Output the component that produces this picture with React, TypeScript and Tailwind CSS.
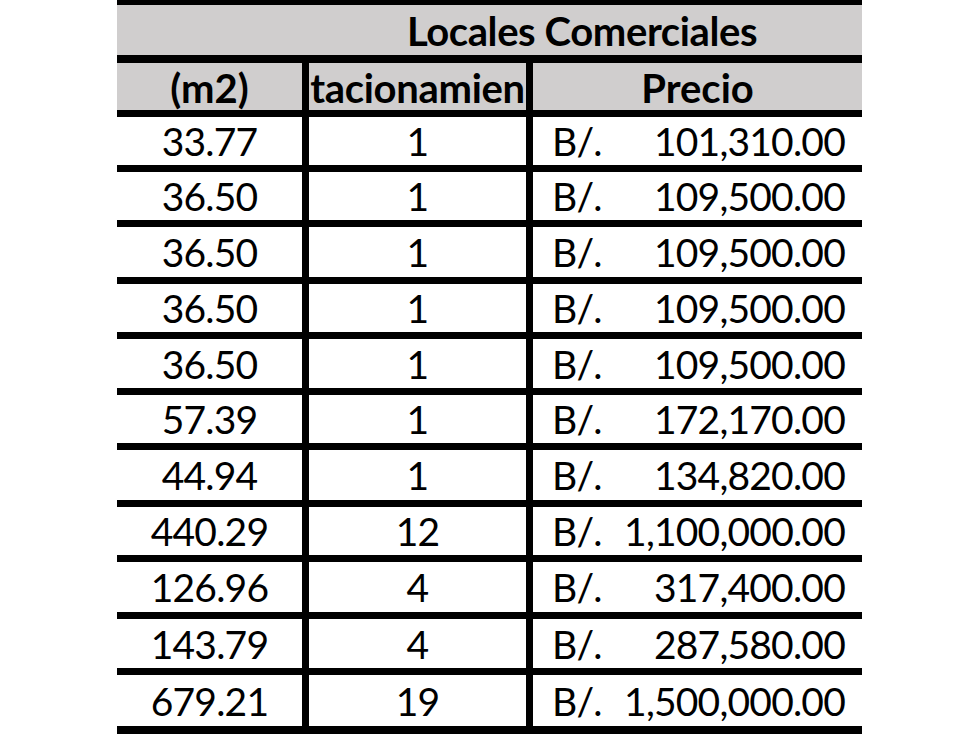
const rows = [
  { area: "33.77", parking: "1", price: "101,310.00", h: "h-[55px]" },
  { area: "36.50", parking: "1", price: "109,500.00", h: "h-[55px]" },
  { area: "36.50", parking: "1", price: "109,500.00", h: "h-[57px]" },
  { area: "36.50", parking: "1", price: "109,500.00", h: "h-[55px]" },
  { area: "36.50", parking: "1", price: "109,500.00", h: "h-[56px]" },
  { area: "57.39", parking: "1", price: "172,170.00", h: "h-[55px]" },
  { area: "44.94", parking: "1", price: "134,820.00", h: "h-[57px]" },
  { area: "440.29", parking: "12", price: "1,100,000.00", h: "h-[55px]" },
  { area: "126.96", parking: "4", price: "317,400.00", h: "h-[57px]" },
  { area: "143.79", parking: "4", price: "287,580.00", h: "h-[56px]" },
  { area: "679.21", parking: "19", price: "1,500,000.00", h: "h-[58px]" },
];

export default function App() {
  return (
    <div className="min-h-screen bg-white">
      <div className="ml-[117px] w-[745px] font-['Lato',sans-serif] text-black">
        {/* title row, text centred over the last two columns */}
        <div className="grid h-[55px] grid-cols-[185px_1fr] border-t-[5px] border-black bg-[#d0cece]">
          <div />
          <div className="flex items-center justify-center pt-[1px] text-[40px] font-bold leading-none tracking-[-0.4px]">
            Locales Comerciales
          </div>
        </div>

        {/* column headers */}
        <div className="grid h-[55px] grid-cols-[185px_224px_336px] border-t-[8px] border-black bg-[#d0cece] text-[40px] font-bold leading-none">
          <div className="flex items-center justify-center pt-[2px]">(m2)</div>
          <div className="flex items-center justify-center overflow-hidden whitespace-nowrap border-l-[7px] border-black pt-[2px] tracking-[-0.3px]">
            tacionamien
          </div>
          <div className="flex items-center justify-center border-l-[7px] border-black pt-[2px]">Precio</div>
        </div>

        {/* data */}
        <div className="border-b-[8px] border-black text-[39px] leading-none tracking-[-0.8px]">
          {rows.map((r, i) => (
            <div
              key={i}
              className={`grid ${r.h} grid-cols-[185px_224px_336px] border-t-[7px] border-black bg-white`}
            >
              <div className="flex items-center justify-center pt-[1px]">{r.area}</div>
              <div className="flex items-center justify-center border-l-[7px] border-black pt-[1px]">
                {r.parking}
              </div>
              <div className="flex items-center justify-between border-l-[7px] border-black pl-[19px] pr-[17px] pt-[1px]">
                <span>B/.</span>
                <span>{r.price}</span>
              </div>
            </div>
          ))}
        </div>
      </div>
    </div>
  );
}
